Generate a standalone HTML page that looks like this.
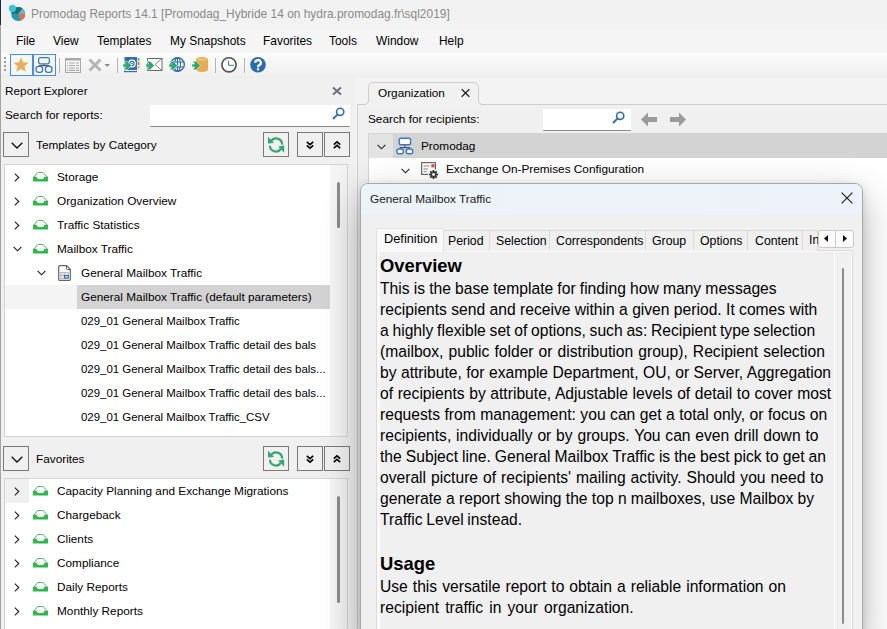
<!DOCTYPE html>
<html><head><meta charset="utf-8">
<style>
*{margin:0;padding:0;box-sizing:border-box}
html,body{width:887px;height:629px;overflow:hidden;background:#f0f0f0;font-family:"Liberation Sans",sans-serif;color:#000}
.a{position:absolute}
.t{position:absolute;font-size:11.8px;line-height:16px;white-space:pre}
.b{position:absolute;font-size:15.65px;line-height:21px;white-space:pre;color:#000}
svg{position:absolute;overflow:visible}
.btn{position:absolute;border:1px solid #7a7a7a;background:#f0f0f0}
.sep{position:absolute;width:1px;height:15px;background:#b4b4b4}
</style></head><body>
<!-- ===== title bar ===== -->
<div class="a" style="left:0;top:0;width:887px;height:29px;background:#f2f2f2"></div>
<div class="a" style="left:0;top:0;width:1px;height:25px;background:#1f2b4d"></div>
<div class="t" style="left:31px;top:6px;font-size:11.95px;color:#8a8a8a">Promodag Reports 14.1 [Promodag_Hybride 14 on hydra.promodag.fr\sql2019]</div>
<svg style="left:8px;top:4px" width="18" height="18" viewBox="0 0 18 18">
 <circle cx="10.2" cy="10" r="7" fill="#1b9db2"/>
 <path d="M10.2 10 L14.5 4.5 A7 7 0 0 0 3.3 9.5 Z" fill="#186f7f"/>
 <path d="M10.2 10 L14.5 4.5 A7 7 0 0 1 17.2 10.3 Z" fill="#73b2bf"/>
 <path d="M10.2 10 L17.2 10.3 A7 7 0 0 1 12.6 16.6 Z" fill="#ef6a4b"/>
 <circle cx="4.4" cy="4.4" r="3.6" fill="#3ec3d6"/>
</svg>
<!-- ===== menu bar ===== -->
<div class="a" style="left:0;top:29px;width:887px;height:24px;background:#f5f5f5"></div>
<div class="t" style="left:16px;top:33px;font-size:11.95px">File</div>
<div class="t" style="left:53px;top:33px;font-size:11.95px">View</div>
<div class="t" style="left:97px;top:33px;font-size:11.95px">Templates</div>
<div class="t" style="left:170px;top:33px;font-size:11.95px">My Snapshots</div>
<div class="t" style="left:263px;top:33px;font-size:11.95px">Favorites</div>
<div class="t" style="left:329px;top:33px;font-size:11.95px">Tools</div>
<div class="t" style="left:376px;top:33px;font-size:11.95px">Window</div>
<div class="t" style="left:439px;top:33px;font-size:11.95px">Help</div>
<!-- ===== toolbar ===== -->
<div class="a" style="left:0;top:53px;width:887px;height:25px;background:linear-gradient(#fcfcfc,#eeeeee)"></div>
<div class="a" style="left:4px;top:57px;width:2px;height:2px;background:#9a9a9a"></div>
<div class="a" style="left:4px;top:61px;width:2px;height:2px;background:#9a9a9a"></div>
<div class="a" style="left:4px;top:65px;width:2px;height:2px;background:#9a9a9a"></div>
<div class="a" style="left:4px;top:69px;width:2px;height:2px;background:#9a9a9a"></div>
<div class="a" style="left:10px;top:54px;width:23px;height:22px;border:1px solid #3d8ef0;background:#f6f6f6"></div>
<div class="a" style="left:33px;top:54px;width:23px;height:22px;border:1px solid #3d8ef0;background:#f6f6f6"></div>
<svg style="left:13px;top:57px" width="16" height="16" viewBox="0 0 16 16"><path d="M8 0.5 L10.2 5.3 L15.5 5.8 L11.5 9.3 L12.7 14.8 L8 12 L3.3 14.8 L4.5 9.3 L0.5 5.8 L5.8 5.3 Z" fill="#e8b05a"/></svg>
<svg style="left:35px;top:57px" width="18" height="17" viewBox="0 0 18 17">
 <rect x="3.6" y="0.7" width="10.8" height="6.2" rx="1.8" fill="none" stroke="#3a78c2" stroke-width="1.3"/>
 <path d="M9 6.9 V8.6 M4.3 9.6 V8.6 H13.7 V9.6" fill="none" stroke="#555" stroke-width="1.1"/>
 <rect x="1" y="9.3" width="6.6" height="6" rx="2.6" fill="none" stroke="#3a78c2" stroke-width="1.3"/>
 <rect x="10.4" y="9.3" width="6.6" height="6" rx="2.6" fill="none" stroke="#3a78c2" stroke-width="1.3"/>
</svg>
<div class="sep" style="left:59px;top:58px"></div>
<svg style="left:65px;top:58px" width="16" height="15" viewBox="0 0 16 15">
 <rect x="0.5" y="0.5" width="15" height="14" fill="none" stroke="#a9a9a9"/>
 <rect x="0" y="0" width="16" height="2.5" fill="#a9a9a9"/>
 <path d="M2 5h1M4 5h6M11 5h3M2 7.5h1M4 7.5h6M11 7.5h3M2 10h1M4 10h6M11 10h3M2 12.3h1M4 12.3h6M11 12.3h3" stroke="#a9a9a9" stroke-width="1.2"/>
</svg>
<svg style="left:88px;top:58px" width="24" height="15" viewBox="0 0 24 15">
 <path d="M1.5 1.5 L12.5 12.5 M12.5 1.5 L1.5 12.5" stroke="#b5b5b5" stroke-width="3"/>
 <path d="M16.5 6 H22 L19.25 9 Z" fill="#8a8a8a"/>
</svg>
<div class="sep" style="left:117px;top:58px"></div>
<!-- address book -->
<svg style="left:123px;top:56px" width="17" height="17" viewBox="0 0 17 17">
 <rect x="1.5" y="1" width="12.5" height="13.5" fill="#2f6db5"/>
 <rect x="1" y="15" width="13" height="1.2" fill="#2f6db5"/>
 <rect x="2.5" y="14" width="11" height="1" fill="#fff"/>
 <circle cx="9" cy="7.5" r="3.3" fill="none" stroke="#fff" stroke-width="1.2"/>
 <circle cx="9" cy="7.5" r="1.2" fill="none" stroke="#fff" stroke-width="0.9"/>
 <rect x="14.8" y="2" width="1.6" height="3" fill="#4fb84f"/>
 <rect x="14.8" y="6" width="1.6" height="3" fill="#e05050"/>
 <rect x="14.8" y="10" width="1.6" height="3" fill="#e8b05a"/>
</svg>
<!-- envelope -->
<svg style="left:146px;top:58px" width="17" height="13" viewBox="0 0 17 13">
 <rect x="1.5" y="0.5" width="14.5" height="12" fill="#fff" stroke="#6a6a6a"/>
 <path d="M16 0.5 L9 6.5 L16 12.5" fill="none" stroke="#6a6a6a" stroke-width="0.8"/>
</svg>
<!-- globe -->
<svg style="left:169px;top:57px" width="16" height="15" viewBox="0 0 16 15">
 <circle cx="8.5" cy="7.5" r="6.8" fill="#fff" stroke="#2f6db5" stroke-width="1.4"/>
 <ellipse cx="8.5" cy="7.5" rx="3" ry="6.8" fill="none" stroke="#2f6db5" stroke-width="1.2"/>
 <path d="M1.7 5 H15.3 M1.7 10 H15.3 M8.5 0.7 V14.3" stroke="#2f6db5" stroke-width="1.2"/>
</svg>
<!-- database -->
<svg style="left:192px;top:57px" width="16" height="15" viewBox="0 0 16 15">
 <path d="M4 2.5 A6 2.5 0 0 1 16 2.5 V12.5 A6 2.5 0 0 1 4 12.5 Z" fill="#e8ac4f"/>
 <ellipse cx="10" cy="2.5" rx="5" ry="1.5" fill="#f0c070"/>
</svg>
<svg style="left:122.5px;top:60.5px" width="9" height="9" viewBox="0 0 9 9"><path d="M0.2 3.2 H3.2 L1 0.4 H4.2 L8.2 4.5 L4.2 8.6 H1 L3.2 5.8 H0.2 Z" fill="#2ea86b" stroke="#fff" stroke-width="0.9" paint-order="stroke"/></svg><svg style="left:145.5px;top:60.5px" width="9" height="9" viewBox="0 0 9 9"><path d="M0.2 3.2 H3.2 L1 0.4 H4.2 L8.2 4.5 L4.2 8.6 H1 L3.2 5.8 H0.2 Z" fill="#2ea86b" stroke="#fff" stroke-width="0.9" paint-order="stroke"/></svg><svg style="left:168.5px;top:60.5px" width="9" height="9" viewBox="0 0 9 9"><path d="M0.2 3.2 H3.2 L1 0.4 H4.2 L8.2 4.5 L4.2 8.6 H1 L3.2 5.8 H0.2 Z" fill="#2ea86b" stroke="#fff" stroke-width="0.9" paint-order="stroke"/></svg><svg style="left:191.5px;top:60.5px" width="9" height="9" viewBox="0 0 9 9"><path d="M0.2 3.2 H3.2 L1 0.4 H4.2 L8.2 4.5 L4.2 8.6 H1 L3.2 5.8 H0.2 Z" fill="#2ea86b" stroke="#fff" stroke-width="0.9" paint-order="stroke"/></svg>
<div class="sep" style="left:215px;top:58px"></div>
<!-- clock -->
<svg style="left:221px;top:57px" width="16" height="16" viewBox="0 0 16 16">
 <circle cx="8" cy="7.8" r="7.1" fill="#fff" stroke="#505050" stroke-width="1.6"/>
 <path d="M7.6 3.6 V8.3 H13" fill="none" stroke="#2f6db5" stroke-width="1"/>
</svg>
<div class="sep" style="left:244px;top:58px"></div>
<!-- help -->
<svg style="left:250px;top:57px" width="16" height="16" viewBox="0 0 16 16">
 <circle cx="8" cy="7.7" r="7.8" fill="#2c6db2"/>
 <path d="M5.2 5.8 A2.8 2.7 0 1 1 9.3 8.1 Q8 8.7 8 10.3" fill="none" stroke="#fff" stroke-width="2.3"/>
 <rect x="6.9" y="11.2" width="2.2" height="2.1" fill="#fff"/>
</svg>
<!-- window left border -->
<div class="a" style="left:0;top:25px;width:1px;height:604px;background:#a3a3a3"></div>

<!-- ===== left panel ===== -->
<div class="t" style="left:5px;top:83px">Report Explorer</div>
<svg style="left:332px;top:87px" width="10" height="8" viewBox="0 0 10 8"><path d="M1 0.5 L9 7.5 M9 0.5 L1 7.5" stroke="#6e6e7a" stroke-width="2"/></svg>
<div class="t" style="left:5px;top:107px">Search for reports:</div>
<div class="a" style="left:150px;top:105px;width:200px;height:22px;background:#fff;border-bottom:1px solid #8a8a8a;border-radius:1px"></div>
<svg style="left:332px;top:107px" width="13" height="13" viewBox="0 0 13 13"><circle cx="8.2" cy="4.8" r="3.6" fill="none" stroke="#2f6db5" stroke-width="1.6"/><path d="M5.6 7.4 L1 12" stroke="#2f6db5" stroke-width="2"/></svg>

<!-- templates header -->
<div class="btn" style="left:3px;top:132px;width:26px;height:25px"></div>
<svg style="left:11px;top:142px" width="12" height="7" viewBox="0 0 12 7"><path d="M0.7 0.7 L6 6 L11.3 0.7" fill="none" stroke="#111" stroke-width="1.3"/></svg>
<div class="t" style="left:36px;top:137px">Templates by Category</div>
<div class="btn" style="left:263px;top:132px;width:26px;height:25px"></div>
<svg style="left:267px;top:136px" width="18" height="17" viewBox="0 0 18 17">
 <path d="M3.8 5.6 A6 6 0 0 1 15.1 8.6" fill="none" stroke="#33a673" stroke-width="2.2"/>
 <path d="M2.9 9.8 A6 6 0 0 0 13.8 13" fill="none" stroke="#33a673" stroke-width="2.2"/>
 <path d="M1 0.8 L1 7.6 L7 7 Z" fill="#33a673"/>
 <path d="M17.2 16.8 L17.2 9.6 L11.2 10.6 Z" fill="#33a673"/>
</svg>
<div class="btn" style="left:297px;top:132px;width:26px;height:25px"></div>
<svg style="left:306px;top:141px" width="8" height="8" viewBox="0 0 8 8"><path d="M0.8 0.8 L4 3.6 L7.2 0.8 M0.8 4.4 L4 7.2 L7.2 4.4" fill="none" stroke="#000" stroke-width="1.6"/></svg>
<div class="btn" style="left:324px;top:132px;width:26px;height:25px"></div>
<svg style="left:333px;top:141px" width="8" height="8" viewBox="0 0 8 8"><path d="M0.8 3.6 L4 0.8 L7.2 3.6 M0.8 7.2 L4 4.4 L7.2 7.2" fill="none" stroke="#000" stroke-width="1.6"/></svg>

<!-- templates tree -->
<div class="a" style="left:4px;top:164px;width:344px;height:273px;background:#fff;border:1px solid #d4d4d4"></div>
<div class="a" style="left:330px;top:165px;width:17px;height:271px;background:linear-gradient(90deg,#f6f6f6,#f1f1f1)"></div>
<div class="a" style="left:337px;top:182px;width:3px;height:46px;background:#8b8b8b;border-radius:2px"></div>
<div class="a" style="left:5px;top:285px;width:72px;height:24px;background:#f4f4f4"></div>
<div class="a" style="left:77px;top:285px;width:253px;height:24px;background:#d3d3d3"></div>
<svg style="left:14px;top:173px" width="6" height="9" viewBox="0 0 6 9"><path d="M0.8 0.6 L4.8 4.5 L0.8 8.4" fill="none" stroke="#222" stroke-width="1.1"/></svg>
<svg style="left:33px;top:172px" width="15" height="10" viewBox="0 0 15 10"><path d="M4.8 0.5 H10.2 L14.3 5.3 M4.8 0.5 L0.7 5.3" fill="none" stroke="#52b862" stroke-width="1"/><path d="M0 4.8 H3.6 L4.8 7 H10.2 L11.4 4.8 H15 V9.6 H0 Z" fill="#2db84b"/></svg>
<div class="t" style="left:57px;top:169px">Storage</div>
<svg style="left:14px;top:197px" width="6" height="9" viewBox="0 0 6 9"><path d="M0.8 0.6 L4.8 4.5 L0.8 8.4" fill="none" stroke="#222" stroke-width="1.1"/></svg>
<svg style="left:33px;top:196px" width="15" height="10" viewBox="0 0 15 10"><path d="M4.8 0.5 H10.2 L14.3 5.3 M4.8 0.5 L0.7 5.3" fill="none" stroke="#52b862" stroke-width="1"/><path d="M0 4.8 H3.6 L4.8 7 H10.2 L11.4 4.8 H15 V9.6 H0 Z" fill="#2db84b"/></svg>
<div class="t" style="left:57px;top:193px">Organization Overview</div>
<svg style="left:14px;top:221px" width="6" height="9" viewBox="0 0 6 9"><path d="M0.8 0.6 L4.8 4.5 L0.8 8.4" fill="none" stroke="#222" stroke-width="1.1"/></svg>
<svg style="left:33px;top:220px" width="15" height="10" viewBox="0 0 15 10"><path d="M4.8 0.5 H10.2 L14.3 5.3 M4.8 0.5 L0.7 5.3" fill="none" stroke="#52b862" stroke-width="1"/><path d="M0 4.8 H3.6 L4.8 7 H10.2 L11.4 4.8 H15 V9.6 H0 Z" fill="#2db84b"/></svg>
<div class="t" style="left:57px;top:217px">Traffic Statistics</div>
<svg style="left:13px;top:246px" width="9" height="6" viewBox="0 0 9 6"><path d="M0.6 0.8 L4.5 4.8 L8.4 0.8" fill="none" stroke="#222" stroke-width="1.1"/></svg>
<svg style="left:33px;top:244px" width="15" height="10" viewBox="0 0 15 10"><path d="M4.8 0.5 H10.2 L14.3 5.3 M4.8 0.5 L0.7 5.3" fill="none" stroke="#52b862" stroke-width="1"/><path d="M0 4.8 H3.6 L4.8 7 H10.2 L11.4 4.8 H15 V9.6 H0 Z" fill="#2db84b"/></svg>
<div class="t" style="left:57px;top:241px">Mailbox Traffic</div>
<svg style="left:37px;top:270px" width="9" height="6" viewBox="0 0 9 6"><path d="M0.6 0.8 L4.5 4.8 L8.4 0.8" fill="none" stroke="#222" stroke-width="1.1"/></svg>
<svg style="left:58px;top:265px" width="13" height="16" viewBox="0 0 13 16"><path d="M1.6 0.7 H8.7 L12.3 4.3 V14.6 Q12.3 15.3 11.6 15.3 H1.4 Q0.7 15.3 0.7 14.6 V1.4 Q0.7 0.7 1.6 0.7 Z" fill="#fff" stroke="#666" stroke-width="1.2"/><path d="M8.5 0.7 V3.6 Q8.5 4.5 9.4 4.5 H12.3" fill="none" stroke="#666" stroke-width="1"/><rect x="2.5" y="7.3" width="8" height="6.2" fill="#e6e6e6" stroke="#a8a8a8" stroke-width="0.7"/><path d="M2.5 10.4 H10.5 M6.3 7.3 V13.5" stroke="#a8a8a8" stroke-width="0.7"/><rect x="6" y="10" width="4.8" height="3.6" fill="#2f6db5"/><rect x="7" y="11" width="2.8" height="1.6" fill="#bcd5f0"/></svg>
<div class="t" style="left:81px;top:265px">General Mailbox Traffic</div>
<div class="t" style="left:81px;top:289px">General Mailbox Traffic (default parameters)</div>
<div class="t" style="left:81px;top:313px;font-size:11.45px">029_01 General Mailbox Traffic</div>
<div class="t" style="left:81px;top:337px;font-size:11.45px">029_01 General Mailbox Traffic detail des bals</div>
<div class="t" style="left:81px;top:361px;font-size:11.45px">029_01 General Mailbox Traffic detail des bals...</div>
<div class="t" style="left:81px;top:385px;font-size:11.45px">029_01 General Mailbox Traffic detail des bals...</div>
<div class="t" style="left:81px;top:409px;font-size:11.45px">029_01 General Mailbox Traffic_CSV</div>

<!-- favorites header -->
<div class="btn" style="left:3px;top:446px;width:26px;height:25px"></div>
<svg style="left:11px;top:456px" width="12" height="7" viewBox="0 0 12 7"><path d="M0.7 0.7 L6 6 L11.3 0.7" fill="none" stroke="#111" stroke-width="1.3"/></svg>
<div class="t" style="left:36px;top:451px">Favorites</div>
<div class="btn" style="left:263px;top:446px;width:26px;height:25px"></div>
<svg style="left:267px;top:450px" width="18" height="17" viewBox="0 0 18 17">
 <path d="M3.8 5.6 A6 6 0 0 1 15.1 8.6" fill="none" stroke="#33a673" stroke-width="2.2"/>
 <path d="M2.9 9.8 A6 6 0 0 0 13.8 13" fill="none" stroke="#33a673" stroke-width="2.2"/>
 <path d="M1 0.8 L1 7.6 L7 7 Z" fill="#33a673"/>
 <path d="M17.2 16.8 L17.2 9.6 L11.2 10.6 Z" fill="#33a673"/>
</svg>
<div class="btn" style="left:297px;top:446px;width:26px;height:25px"></div>
<svg style="left:306px;top:455px" width="8" height="8" viewBox="0 0 8 8"><path d="M0.8 0.8 L4 3.6 L7.2 0.8 M0.8 4.4 L4 7.2 L7.2 4.4" fill="none" stroke="#000" stroke-width="1.6"/></svg>
<div class="btn" style="left:324px;top:446px;width:26px;height:25px"></div>
<svg style="left:333px;top:455px" width="8" height="8" viewBox="0 0 8 8"><path d="M0.8 3.6 L4 0.8 L7.2 3.6 M0.8 7.2 L4 4.4 L7.2 7.2" fill="none" stroke="#000" stroke-width="1.6"/></svg>

<!-- favorites tree -->
<div class="a" style="left:4px;top:478px;width:344px;height:160px;background:#fff;border:1px solid #d4d4d4"></div>
<div class="a" style="left:330px;top:479px;width:17px;height:160px;background:linear-gradient(90deg,#f6f6f6,#f1f1f1)"></div>
<div class="a" style="left:337px;top:496px;width:3px;height:107px;background:#8b8b8b;border-radius:2px"></div>
<div class="a" style="left:5px;top:479px;width:24px;height:24px;background:#f0f0f0"></div>
<svg style="left:14px;top:487px" width="6" height="9" viewBox="0 0 6 9"><path d="M0.8 0.6 L4.8 4.5 L0.8 8.4" fill="none" stroke="#222" stroke-width="1.1"/></svg>
<svg style="left:33px;top:486px" width="15" height="10" viewBox="0 0 15 10"><path d="M4.8 0.5 H10.2 L14.3 5.3 M4.8 0.5 L0.7 5.3" fill="none" stroke="#52b862" stroke-width="1"/><path d="M0 4.8 H3.6 L4.8 7 H10.2 L11.4 4.8 H15 V9.6 H0 Z" fill="#2db84b"/></svg>
<div class="t" style="left:57px;top:483px">Capacity Planning and Exchange Migrations</div>
<svg style="left:14px;top:511px" width="6" height="9" viewBox="0 0 6 9"><path d="M0.8 0.6 L4.8 4.5 L0.8 8.4" fill="none" stroke="#222" stroke-width="1.1"/></svg>
<svg style="left:33px;top:510px" width="15" height="10" viewBox="0 0 15 10"><path d="M4.8 0.5 H10.2 L14.3 5.3 M4.8 0.5 L0.7 5.3" fill="none" stroke="#52b862" stroke-width="1"/><path d="M0 4.8 H3.6 L4.8 7 H10.2 L11.4 4.8 H15 V9.6 H0 Z" fill="#2db84b"/></svg>
<div class="t" style="left:57px;top:507px">Chargeback</div>
<svg style="left:14px;top:535px" width="6" height="9" viewBox="0 0 6 9"><path d="M0.8 0.6 L4.8 4.5 L0.8 8.4" fill="none" stroke="#222" stroke-width="1.1"/></svg>
<svg style="left:33px;top:534px" width="15" height="10" viewBox="0 0 15 10"><path d="M4.8 0.5 H10.2 L14.3 5.3 M4.8 0.5 L0.7 5.3" fill="none" stroke="#52b862" stroke-width="1"/><path d="M0 4.8 H3.6 L4.8 7 H10.2 L11.4 4.8 H15 V9.6 H0 Z" fill="#2db84b"/></svg>
<div class="t" style="left:57px;top:531px">Clients</div>
<svg style="left:14px;top:559px" width="6" height="9" viewBox="0 0 6 9"><path d="M0.8 0.6 L4.8 4.5 L0.8 8.4" fill="none" stroke="#222" stroke-width="1.1"/></svg>
<svg style="left:33px;top:558px" width="15" height="10" viewBox="0 0 15 10"><path d="M4.8 0.5 H10.2 L14.3 5.3 M4.8 0.5 L0.7 5.3" fill="none" stroke="#52b862" stroke-width="1"/><path d="M0 4.8 H3.6 L4.8 7 H10.2 L11.4 4.8 H15 V9.6 H0 Z" fill="#2db84b"/></svg>
<div class="t" style="left:57px;top:555px">Compliance</div>
<svg style="left:14px;top:583px" width="6" height="9" viewBox="0 0 6 9"><path d="M0.8 0.6 L4.8 4.5 L0.8 8.4" fill="none" stroke="#222" stroke-width="1.1"/></svg>
<svg style="left:33px;top:582px" width="15" height="10" viewBox="0 0 15 10"><path d="M4.8 0.5 H10.2 L14.3 5.3 M4.8 0.5 L0.7 5.3" fill="none" stroke="#52b862" stroke-width="1"/><path d="M0 4.8 H3.6 L4.8 7 H10.2 L11.4 4.8 H15 V9.6 H0 Z" fill="#2db84b"/></svg>
<div class="t" style="left:57px;top:579px">Daily Reports</div>
<svg style="left:14px;top:607px" width="6" height="9" viewBox="0 0 6 9"><path d="M0.8 0.6 L4.8 4.5 L0.8 8.4" fill="none" stroke="#222" stroke-width="1.1"/></svg>
<svg style="left:33px;top:606px" width="15" height="10" viewBox="0 0 15 10"><path d="M4.8 0.5 H10.2 L14.3 5.3 M4.8 0.5 L0.7 5.3" fill="none" stroke="#52b862" stroke-width="1"/><path d="M0 4.8 H3.6 L4.8 7 H10.2 L11.4 4.8 H15 V9.6 H0 Z" fill="#2db84b"/></svg>
<div class="t" style="left:57px;top:603px">Monthly Reports</div>
<svg style="left:14px;top:631px" width="6" height="9" viewBox="0 0 6 9"><path d="M0.8 0.6 L4.8 4.5 L0.8 8.4" fill="none" stroke="#222" stroke-width="1.1"/></svg>
<svg style="left:33px;top:630px" width="15" height="10" viewBox="0 0 15 10"><path d="M4.8 0.5 H10.2 L14.3 5.3 M4.8 0.5 L0.7 5.3" fill="none" stroke="#52b862" stroke-width="1"/><path d="M0 4.8 H3.6 L4.8 7 H10.2 L11.4 4.8 H15 V9.6 H0 Z" fill="#2db84b"/></svg>
<div class="t" style="left:57px;top:627px">Quarterly Reports</div>

<!-- splitter -->

<!-- ===== right panel ===== -->
<div class="a" style="left:355px;top:78px;width:532px;height:551px;background:#f3f3f3"></div>
<div class="a" style="left:357px;top:105px;width:530px;height:524px;background:#f0f0f0;border-left:1px solid #cfcfcf"></div>
<svg style="left:0;top:0" width="887" height="140" viewBox="0 0 887 140"><path d="M364 104.5 Q368.5 104.5 368.5 100 V87.5 Q368.5 82.5 373.5 82.5 H473.5 Q478.5 82.5 478.5 87.5 V100 Q478.5 104.5 483 104.5 Z" fill="#f1f1f1"/><path d="M357 104.5 H364 Q368.5 104.5 368.5 100 V87.5 Q368.5 82.5 373.5 82.5 H473.5 Q478.5 82.5 478.5 87.5 V100 Q478.5 104.5 483 104.5 H887" fill="none" stroke="#cdcdcd" stroke-width="1"/></svg>
<div class="t" style="left:378px;top:85px">Organization</div>
<svg style="left:461px;top:89px" width="9" height="8" viewBox="0 0 9 8"><path d="M0.7 0.3 L8.3 7.7 M8.3 0.3 L0.7 7.7" stroke="#222" stroke-width="1.2"/></svg>
<div class="t" style="left:368px;top:111px">Search for recipients:</div>
<div class="a" style="left:543px;top:109px;width:88px;height:22px;background:#fff;border-bottom:1px solid #8a8a8a;border-radius:1px"></div>
<svg style="left:612px;top:111px" width="13" height="13" viewBox="0 0 13 13"><circle cx="8.2" cy="4.8" r="3.6" fill="none" stroke="#2f6db5" stroke-width="1.6"/><path d="M5.6 7.4 L1 12" stroke="#2f6db5" stroke-width="2"/></svg>
<svg style="left:641px;top:112px" width="16" height="15" viewBox="0 0 16 15"><path d="M0 7.5 L7 0.5 V5 H16 V10 H7 V14.5 Z" fill="#9b9b9b"/></svg>
<svg style="left:670px;top:112px" width="16" height="15" viewBox="0 0 16 15"><path d="M16 7.5 L9 0.5 V5 H0 V10 H9 V14.5 Z" fill="#9b9b9b"/></svg>
<!-- org tree -->
<div class="a" style="left:368px;top:133px;width:519px;height:496px;background:#fff;border-left:1px solid #d4d4d4;border-top:1px solid #d4d4d4"></div>
<div class="a" style="left:369px;top:134px;width:24px;height:24px;background:#e3e3e3"></div>
<div class="a" style="left:393px;top:134px;width:494px;height:24px;background:#d3d3d3"></div>
<svg style="left:377px;top:144px" width="9" height="6" viewBox="0 0 9 6"><path d="M0.6 0.8 L4.5 4.8 L8.4 0.8" fill="none" stroke="#222" stroke-width="1.1"/></svg>
<svg style="left:396px;top:137px" width="18" height="18" viewBox="0 0 18 18">
 <rect x="3.2" y="1.2" width="11.4" height="6.6" rx="1.8" fill="#fff" stroke="#3a78c2" stroke-width="1.4"/>
 <path d="M8.9 7.8 V10.5 M4.2 12.2 V10.6 H13.6 V12.2" fill="none" stroke="#555" stroke-width="1.1"/>
 <rect x="0.8" y="12" width="6.6" height="4.8" rx="2.2" fill="#fff" stroke="#3a78c2" stroke-width="1.4"/>
 <rect x="10.2" y="12" width="6.6" height="4.8" rx="2.2" fill="#fff" stroke="#3a78c2" stroke-width="1.4"/>
</svg>
<div class="t" style="left:421px;top:138px">Promodag</div>
<svg style="left:401px;top:168px" width="9" height="6" viewBox="0 0 9 6"><path d="M0.6 0.8 L4.5 4.8 L8.4 0.8" fill="none" stroke="#222" stroke-width="1.1"/></svg>
<svg style="left:421px;top:162px" width="18" height="18" viewBox="0 0 18 18">
 <path d="M0.6 0.6 H14.4 V9 M9 12.4 H0.6 Z" fill="#fff" stroke="#666" stroke-width="1.2"/>
 <rect x="0.6" y="0.6" width="13.8" height="11.8" fill="#fff" stroke="#6a6a6a" stroke-width="1.2"/>
 <rect x="10.3" y="2.2" width="3.2" height="3.2" fill="#e04848"/>
 <path d="M2.5 4 H8.5 M2.5 7 H7 M2.5 9.5 H5.5" stroke="#8a8a8a" stroke-width="1"/>
 <circle cx="12.5" cy="12.5" r="5.6" fill="#fff"/>
 <path d="M15.65 11.52 L17.12 11.66 L17.12 13.34 L15.65 13.48 L15.42 14.04 L16.36 15.17 L15.17 16.36 L14.04 15.42 L13.48 15.65 L13.34 17.12 L11.66 17.12 L11.52 15.65 L10.96 15.42 L9.83 16.36 L8.64 15.17 L9.58 14.04 L9.35 13.48 L7.88 13.34 L7.88 11.66 L9.35 11.52 L9.58 10.96 L8.64 9.83 L9.83 8.64 L10.96 9.58 L11.52 9.35 L11.66 7.88 L13.34 7.88 L13.48 9.35 L14.04 9.58 L15.17 8.64 L16.36 9.83 L15.42 10.96 Z" fill="#3d3d3d"/>
 <circle cx="12.5" cy="12.5" r="1.4" fill="#fff"/>
</svg>
<div class="t" style="left:446px;top:161px">Exchange On-Premises Configuration</div>
<!-- dialog shadow -->
<div class="a" style="left:360px;top:183px;width:503px;height:460px;border-radius:8px;box-shadow:0 2px 8px rgba(0,0,0,0.12),0 14px 38px rgba(0,0,0,0.30)"></div>
<!-- dialog -->
<div class="a" style="left:360px;top:183px;width:503px;height:460px;border-radius:8px;background:#f0f0f0;border:1px solid #a8a8a8;overflow:hidden">
 <div class="a" style="left:0;top:0;width:503px;height:30px;background:linear-gradient(90deg,#ecf4f7,#edf3f9 50%,#eef2fb)"></div>
</div>
<div class="t" style="left:370px;top:191px;color:#1a1a1a">General Mailbox Traffic</div>
<svg style="left:841px;top:192px" width="12" height="12" viewBox="0 0 12 12"><path d="M0.6 0.6 L11.4 11.4 M11.4 0.6 L0.6 11.4" stroke="#222" stroke-width="1.2"/></svg>
<!-- tab panel -->
<div class="a" style="left:376px;top:250px;width:477px;height:390px;border:1px solid #dcdcdc;background:#f9f9f9"></div>
<div class="a" style="left:380px;top:252px;width:454px;height:380px;background:#f0f0f0"></div>
<div class="a" style="left:834px;top:252px;width:17px;height:380px;border-left:1px solid #fbfbfb;background:#f0f0f0"></div>
<div class="a" style="left:842px;top:268px;width:2px;height:356px;background:#8b8b8b;border-radius:1px"></div>
<!-- tabs -->
<div class="a" style="left:443px;top:230px;width:375px;height:21px;border:1px solid #dadada;border-bottom:none;background:#f0f0f0"></div>
<div class="a" style="left:489px;top:231px;width:1px;height:19px;background:#dadada"></div>
<div class="a" style="left:549px;top:231px;width:1px;height:19px;background:#dadada"></div>
<div class="a" style="left:645px;top:231px;width:1px;height:19px;background:#dadada"></div>
<div class="a" style="left:693px;top:231px;width:1px;height:19px;background:#dadada"></div>
<div class="a" style="left:747px;top:231px;width:1px;height:19px;background:#dadada"></div>
<div class="a" style="left:802px;top:231px;width:1px;height:19px;background:#dadada"></div>
<div class="a" style="left:376px;top:228px;width:68px;height:24px;border:1px solid #e2e2e2;border-bottom:none;background:#f9f9f9"></div>
<div class="t" style="left:384px;top:231px;font-size:12.8px">Definition</div>
<div class="t" style="left:448px;top:233px;font-size:12.3px">Period</div>
<div class="t" style="left:496px;top:233px;font-size:12.3px">Selection</div>
<div class="t" style="left:556px;top:233px;font-size:12.3px">Correspondents</div>
<div class="t" style="left:652px;top:233px;font-size:12.3px">Group</div>
<div class="t" style="left:700px;top:233px;font-size:12.3px">Options</div>
<div class="t" style="left:755px;top:233px;font-size:12.3px">Content</div>
<div class="a" style="left:803px;top:232px;width:15px;height:18px;overflow:hidden"><div class="t" style="left:6px;top:0px;font-size:12.3px">Information</div></div>
<div class="a" style="left:818px;top:230px;width:36px;height:18px;border:1px solid #c9c9c9;border-radius:3px;background:#fbfbfb"></div>
<div class="a" style="left:835px;top:231px;width:1px;height:16px;background:#c9c9c9"></div>
<svg style="left:824px;top:235px" width="4" height="7" viewBox="0 0 4 7"><path d="M4 0 V7 L0 3.5 Z" fill="#111"/></svg>
<svg style="left:843px;top:235px" width="4" height="7" viewBox="0 0 4 7"><path d="M0 0 V7 L4 3.5 Z" fill="#111"/></svg>
<!-- content -->
<div class="a" style="left:380px;top:255px;font-size:18.4px;font-weight:bold;line-height:22px;white-space:pre">Overview</div>
<div class="b" style="left:380px;top:278px;word-spacing:-0.17px">This is the base template for finding how many messages</div>
<div class="b" style="left:380px;top:299px;word-spacing:0.00px">recipients send and receive within a given period. It comes with</div>
<div class="b" style="left:380px;top:320px;word-spacing:-0.57px">a highly flexible set of options, such as: Recipient type selection</div>
<div class="b" style="left:380px;top:341px;word-spacing:0.71px">(mailbox, public folder or distribution group), Recipient selection</div>
<div class="b" style="left:380px;top:362px;word-spacing:0.09px">by attribute, for example Department, OU, or Server, Aggregation</div>
<div class="b" style="left:380px;top:383px;word-spacing:0.26px">of recipients by attribute, Adjustable levels of detail to cover most</div>
<div class="b" style="left:380px;top:404px;word-spacing:0.14px">requests from management: you can get a total only, or focus on</div>
<div class="b" style="left:380px;top:425px;word-spacing:0.46px">recipients, individually or by groups. You can even drill down to</div>
<div class="b" style="left:380px;top:446px;word-spacing:-0.27px">the Subject line. General Mailbox Traffic is the best pick to get an</div>
<div class="b" style="left:380px;top:467px;word-spacing:0.67px">overall picture of recipients' mailing activity. Should you need to</div>
<div class="b" style="left:380px;top:488px;word-spacing:-0.06px">generate a report showing the top n mailboxes, use Mailbox by</div>
<div class="b" style="left:380px;top:509px;word-spacing:-0.65px">Traffic Level instead.</div>
<div class="a" style="left:380px;top:553px;font-size:18.4px;font-weight:bold;line-height:22px;white-space:pre">Usage</div>
<div class="b" style="left:380px;top:576px;word-spacing:0.67px">Use this versatile report to obtain a reliable information on</div>
<div class="b" style="left:380px;top:597px;word-spacing:1.75px">recipient traffic in your organization.</div>
</body></html>
